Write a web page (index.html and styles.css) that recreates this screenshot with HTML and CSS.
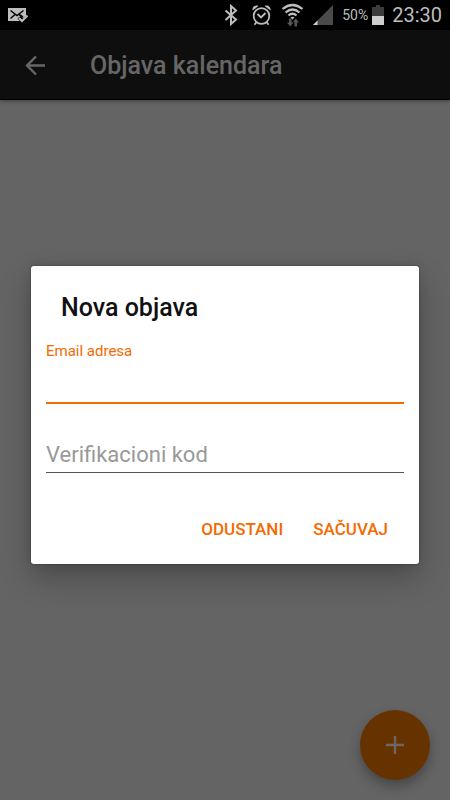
FILE: index.html
```html
<!DOCTYPE html>
<html lang="sr-Latn">
<head>
<meta charset="utf-8">
<meta name="viewport" content="width=device-width, initial-scale=1">
<title>Objava kalendara</title>
<link rel="stylesheet" href="styles.css">
</head>
<body>
<div class="screen">
  <div class="status">
    <svg class="mail" width="20" height="16" viewBox="0 0 20 16" aria-hidden="true">
      <path d="M0 1H18V9L15 11L12.500 9L9.500 11.500L12 14H0Z" fill="#bdbdbd"/>
      <path d="M2.500 3.500L9 8.500L15.500 3.500M2.500 11.500L7 7.500M15 10L11 7.500" fill="none" stroke="#000" stroke-width="1.500"/>
      <path d="M11 11L14 14L19.500 8.500" fill="none" stroke="#bdbdbd" stroke-width="2"/>
    </svg>
    <div class="indicators">
      <svg width="18" height="22" viewBox="0 0 18 22" aria-hidden="true">
        <path d="M4.500 6.500L15 15.500L10 20V2L15 6.500L4.500 16" fill="none" stroke="#bdbdbd" stroke-width="2"/>
      </svg>
      <svg width="26" height="22" viewBox="0 0 26 22" aria-hidden="true">
        <g fill="none" stroke="#bdbdbd" stroke-width="1.800">
          <circle cx="14.500" cy="12" r="7.800"/>
          <path d="M10.500 10L14 13.500L18.500 9"/>
          <path d="M9.500 18L7.500 20.800M19.500 18L21.500 20.800"/>
        </g>
        <path d="M5.500 6.500C5 3 8 .5 11.500 2ZM23.500 6.500C24 3 21 .5 17.500 2Z" fill="#bdbdbd"/>
      </svg>
      <svg width="24" height="24" viewBox="0 0 24 24" aria-hidden="true">
        <g fill="none" stroke="#bdbdbd" stroke-width="2.200">
          <path d="M1.500 6Q11.500 -2 21.500 6M4.500 9.500Q11.500 3.500 18.500 9.500M7.500 12.500Q11.500 9 15.500 12.500"/>
        </g>
        <path d="M11.500 16.500L9.500 14.500Q11.500 13 13.500 14.500Z" fill="#bdbdbd"/>
        <path d="M8 15.500H10.500V19.500H12.500L9.200 23.500L6 19.500H8ZM13.500 23.500H16V19.500H18L14.800 15.500L12 19H13.500Z" fill="#555"/>
      </svg>
      <svg width="21" height="22" viewBox="0 0 21 22" aria-hidden="true">
        <path d="M20 1V21H0Z" fill="#4a4a4a"/><path d="M4.500 16.500V21H0Z" fill="#d0d0d0"/>
      </svg>
      <div class="battery">
        <span>50%</span>
        <svg width="12" height="22" viewBox="0 0 12 22" aria-hidden="true">
          <path d="M4 1H8V3H12V12H0V3H4Z" fill="#3c3c3c"/><path d="M0 12H12V21H0Z" fill="#cecece"/>
        </svg>
      </div>
      <time class="clock">23:30</time>
    </div>
  </div>
  <header class="appbar">
    <button class="back" type="button" aria-label="Nazad">
      <svg width="20" height="20" viewBox="0 0 20 20" aria-hidden="true">
        <path d="M20 9.500H2M11 .5L2 9.500L11 18.500" fill="none" stroke="#666" stroke-width="2.400"/>
      </svg>
    </button>
    <h1>Objava kalendara</h1>
  </header>
  <main class="content">
    <button class="fab" type="button" aria-label="Dodaj">
      <svg width="18" height="18" viewBox="0 0 18 18" aria-hidden="true">
        <path d="M9 0V18M0 9H18" stroke="#6c6662" stroke-width="2.400"/>
      </svg>
    </button>
  </main>
  <div class="overlay">
    <form class="dialog" role="dialog" aria-labelledby="dialog-title">
      <h2 id="dialog-title">Nova objava</h2>
      <label class="caption" for="email">Email adresa</label>
      <input class="field active" id="email" type="email">
      <input class="field" id="code" type="text" placeholder="Verifikacioni kod" aria-label="Verifikacioni kod">
      <div class="actions">
        <button type="button">ODUSTANI</button>
        <button type="button">SAČUVAJ</button>
      </div>
    </form>
  </div>
</div>
</body>
</html>
```
FILE: styles.css
```css
* {
  box-sizing: border-box;
}

body {
  margin: 0;
  font-family: Roboto, "Liberation Sans", sans-serif;
  background: #646464;
}

button,
input {
  margin: 0;
  padding: 0;
  border: 0;
  background: none;
  font: inherit;
}

svg {
  display: block;
}

h1,
h2 {
  margin: 0;
  font-weight: 500;
}

.screen {
  position: relative;
  display: flex;
  flex-direction: column;
  min-height: 100vh;
}

.status {
  display: flex;
  align-items: center;
  justify-content: space-between;
  height: 30px;
  padding: 0 8px;
  background: #000;
  color: #bdbdbd;
}

.indicators {
  display: flex;
  align-items: center;
  gap: 8px;
}

.battery {
  display: flex;
  align-items: center;
  gap: 4px;
  font-size: 14px;
}

.clock {
  font-size: 20px;
}

.appbar {
  display: flex;
  align-items: center;
  gap: 45px;
  height: 70px;
  padding: 2px 25px 0;
  background: #0e0e0e;
  border-bottom: 1px solid #000;
  box-shadow: 0 1px 4px rgba(0, 0, 0, 0.4);
  color: #666;
}

.appbar h1 {
  font-size: 25px;
  line-height: 30px;
}

.content {
  flex: 1;
  display: flex;
  align-items: flex-end;
  justify-content: flex-end;
  padding: 20px;
}

.fab {
  display: flex;
  align-items: center;
  justify-content: center;
  width: 70px;
  height: 70px;
  border-radius: 50%;
  background: #663300;
  box-shadow: 0 6px 12px rgba(0, 0, 0, 0.3);
}

.overlay {
  position: absolute;
  inset: 30px 0 0;
  display: flex;
  align-items: center;
  padding: 0 31px;
}

.dialog {
  flex: 1;
  display: flex;
  flex-direction: column;
  min-width: 0;
  padding: 27px 15px 13px;
  border-radius: 3px;
  background: #fff;
  box-shadow: 0 14px 30px rgba(0, 0, 0, 0.25), 0 0 12px rgba(0, 0, 0, 0.1), 0 0 2px rgba(0, 0, 0, 0.4);
}

.dialog h2 {
  padding: 0 15px;
  font-size: 25px;
  line-height: 30px;
  color: #111;
}

.caption {
  margin-top: 18px;
  font-size: 15px;
  line-height: 20px;
  color: #f56a00;
}

.field {
  width: 100%;
  height: 37px;
  margin-top: 32px;
  border-bottom: 1px solid #555;
  border-radius: 0;
  outline: none;
  font-size: 22px;
  color: #111;
}

.field.active {
  height: 43px;
  margin-top: 0;
  border-bottom: 2px solid #f56a00;
}

.field::placeholder {
  color: #999;
  opacity: 1;
}

.actions {
  display: flex;
  justify-content: flex-end;
  gap: 10px;
  margin-top: 33px;
  padding-right: 6px;
}

.actions button {
  height: 45px;
  padding: 0 10px;
  font-size: 17px;
  font-weight: 500;
  color: #f56a00;
}
```
